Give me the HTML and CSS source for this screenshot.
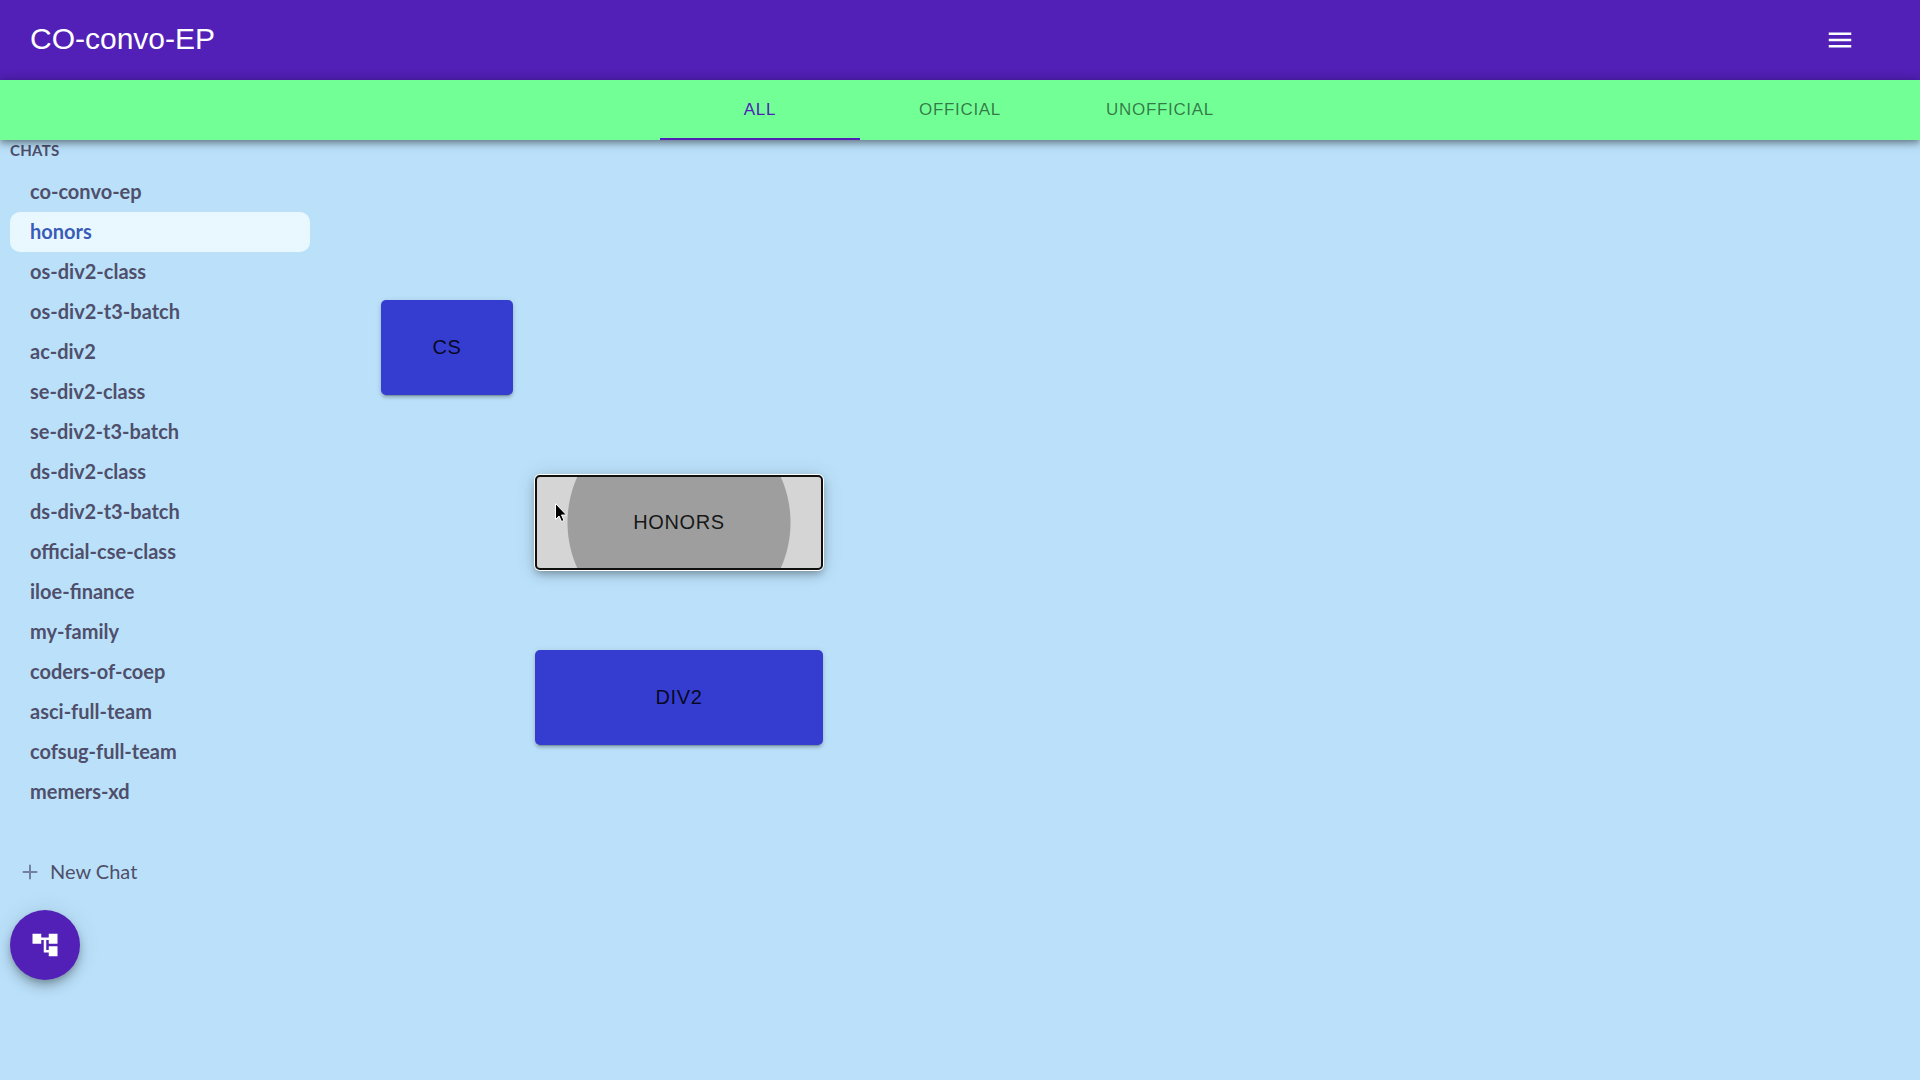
FILE: index.html
```html
<!DOCTYPE html>
<html lang="en">
<head>
<meta charset="utf-8">
<title>CO-convo-EP</title>
<link rel="stylesheet" href="styles.css">
</head>
<body>
<header class="topbar">
  <h1 class="brand">CO-convo-EP</h1>
  <button class="menu-button" type="button" aria-label="Menu">
    <svg class="icon" viewBox="0 0 24 24" aria-hidden="true"><path d="M3 18h18v-2H3v2zm0-5h18v-2H3v2zm0-7v2h18V6H3z"/></svg>
  </button>
</header>
<nav class="tabs" role="tablist">
  <button class="tab tab-active" type="button" role="tab" aria-selected="true">ALL</button>
  <button class="tab" type="button" role="tab" aria-selected="false">OFFICIAL</button>
  <button class="tab" type="button" role="tab" aria-selected="false">UNOFFICIAL</button>
</nav>
<div class="content">
  <aside class="sidebar">
    <h2 class="sidebar-title">CHATS</h2>
    <ul class="chats">
      <li><a class="chat" href="#">co-convo-ep</a></li>
      <li><a class="chat chat-active" href="#">honors</a></li>
      <li><a class="chat" href="#">os-div2-class</a></li>
      <li><a class="chat" href="#">os-div2-t3-batch</a></li>
      <li><a class="chat" href="#">ac-div2</a></li>
      <li><a class="chat" href="#">se-div2-class</a></li>
      <li><a class="chat" href="#">se-div2-t3-batch</a></li>
      <li><a class="chat" href="#">ds-div2-class</a></li>
      <li><a class="chat" href="#">ds-div2-t3-batch</a></li>
      <li><a class="chat" href="#">official-cse-class</a></li>
      <li><a class="chat" href="#">iloe-finance</a></li>
      <li><a class="chat" href="#">my-family</a></li>
      <li><a class="chat" href="#">coders-of-coep</a></li>
      <li><a class="chat" href="#">asci-full-team</a></li>
      <li><a class="chat" href="#">cofsug-full-team</a></li>
      <li><a class="chat" href="#">memers-xd</a></li>
    </ul>
    <button class="new-chat" type="button">
      <svg class="plus" viewBox="0 0 20 20" aria-hidden="true"><path d="M10 3.500v13M3.500 10h13"/></svg>
      <span class="new-chat-label">New Chat</span>
    </button>
    <button class="fab" type="button" aria-label="Tree view">
      <svg class="icon" viewBox="0 0 24 24" aria-hidden="true"><path d="M22 11V3h-7v3H9V3H2v8h7V8h2v10h4v3h7v-8h-7v3h-2V8h2v3z"/></svg>
    </button>
  </aside>
  <main class="tree">
    <button class="node node-root" type="button">CS</button>
    <div class="branch">
      <button class="node node-focused" type="button">HONORS
        <svg class="pointer" viewBox="0 0 14 22" aria-hidden="true"><path d="M1.500 1.500v16l3.500-3.500 2.500 5.500 2.500-1-2.500-5.500h5z"/></svg>
      </button>
      <button class="node" type="button">DIV2</button>
    </div>
  </main>
</div>
</body>
</html>
```
FILE: styles.css
```css
* {
  box-sizing: border-box;
}

body {
  margin: 0;
  min-height: 100vh;
  background: #bbe1fa;
  font-family: Lato, sans-serif;
}

button {
  margin: 0;
  padding: 0;
  border: 0;
  background: none;
  font: inherit;
}

.icon {
  display: block;
  width: 30px;
  height: 30px;
  fill: #fff;
}

.topbar {
  display: flex;
  align-items: center;
  justify-content: space-between;
  height: 80px;
  padding: 0 50px 0 30px;
  background: #5220b7;
  color: #fff;
}

.brand {
  margin: 0;
  padding-bottom: 2px;
  font: 400 30px/40px "Liberation Sans", Arial, sans-serif;
}

.menu-button {
  padding: 15px;
}

.tabs {
  position: relative;
  display: flex;
  justify-content: center;
  height: 60px;
  background: #72ff96;
  box-shadow: 0 2px 5px -1px rgba(0, 0, 0, 0.2), 0 5px 6px rgba(0, 0, 0, 0.14), 0 1px 12px rgba(0, 0, 0, 0.3);
}

.tab {
  width: 200px;
  border-top: 2px solid transparent;
  border-bottom: 2px solid transparent;
  font: 400 17px/24px "Liberation Sans", Arial, sans-serif;
  letter-spacing: 0.04em;
  color: rgba(0, 0, 0, 0.54);
}

.tab-active {
  border-bottom-color: #5220b7;
  color: #5220b7;
}

.content {
  display: flex;
}

.sidebar {
  display: flex;
  flex-direction: column;
  width: 320px;
  padding: 0 10px;
}

.sidebar-title {
  margin: 0 0 12px;
  font-size: 15px;
  font-weight: 700;
  line-height: 20px;
  letter-spacing: 0.02em;
  color: #4f4f6b;
}

.chats {
  margin: 0 0 40px;
  padding: 0;
  list-style: none;
}

.chat {
  display: block;
  padding: 0 20px 2px;
  border-radius: 10px;
  font-size: 20px;
  font-weight: 700;
  line-height: 38px;
  color: #4f4f6b;
  text-decoration: none;
}

.chat-active {
  background: #e9f8ff;
  color: #3a5bb8;
}

.new-chat {
  display: flex;
  align-items: center;
  gap: 10px;
  height: 40px;
  padding: 0 10px;
  font-size: 20px;
  line-height: 38px;
  color: #4f4f6b;
}

.new-chat-label {
  padding-bottom: 2px;
}

.plus {
  width: 20px;
  height: 20px;
  fill: none;
  stroke: #7480a0;
  stroke-width: 2;
  stroke-linecap: round;
}

.fab {
  display: grid;
  place-items: center;
  width: 70px;
  height: 70px;
  margin-top: 18px;
  border-radius: 50%;
  background: #5220b7;
  box-shadow: 0 4px 6px -1px rgba(0, 0, 0, 0.2), 0 8px 12px rgba(0, 0, 0, 0.14), 0 1px 22px rgba(0, 0, 0, 0.12);
}

.tree,
.branch {
  display: flex;
  flex-direction: column;
  align-items: flex-start;
  gap: 80px;
}

.tree {
  padding: 160px 0 0 61px;
}

.branch {
  padding-left: 154px;
}

.node {
  width: 288px;
  height: 95px;
  border-radius: 5px;
  background: #353dd1;
  box-shadow: 0 4px 1px -3px rgba(0, 0, 0, 0.2), 0 3px 3px rgba(0, 0, 0, 0.14), 0 1px 6px rgba(0, 0, 0, 0.12);
  font: 400 20px/35px "Liberation Sans", Arial, sans-serif;
  letter-spacing: 0.03em;
  color: rgba(0, 0, 0, 0.87);
}

.node-root {
  width: 132px;
}

.node-focused {
  position: relative;
  border: 2px solid #101010;
  background: radial-gradient(circle at center, #9e9e9e 111px, #d5d5d5 112px);
  box-shadow: 0 0 0 1px #fff, 0 4px 6px -1px rgba(0, 0, 0, 0.2), 0 5px 12px rgba(0, 0, 0, 0.14), 0 1px 20px rgba(0, 0, 0, 0.16);
}

.pointer {
  position: absolute;
  top: 25px;
  left: 17px;
  width: 14px;
  height: 22px;
  fill: #000;
  stroke: #fff;
  stroke-width: 1;
}
```
